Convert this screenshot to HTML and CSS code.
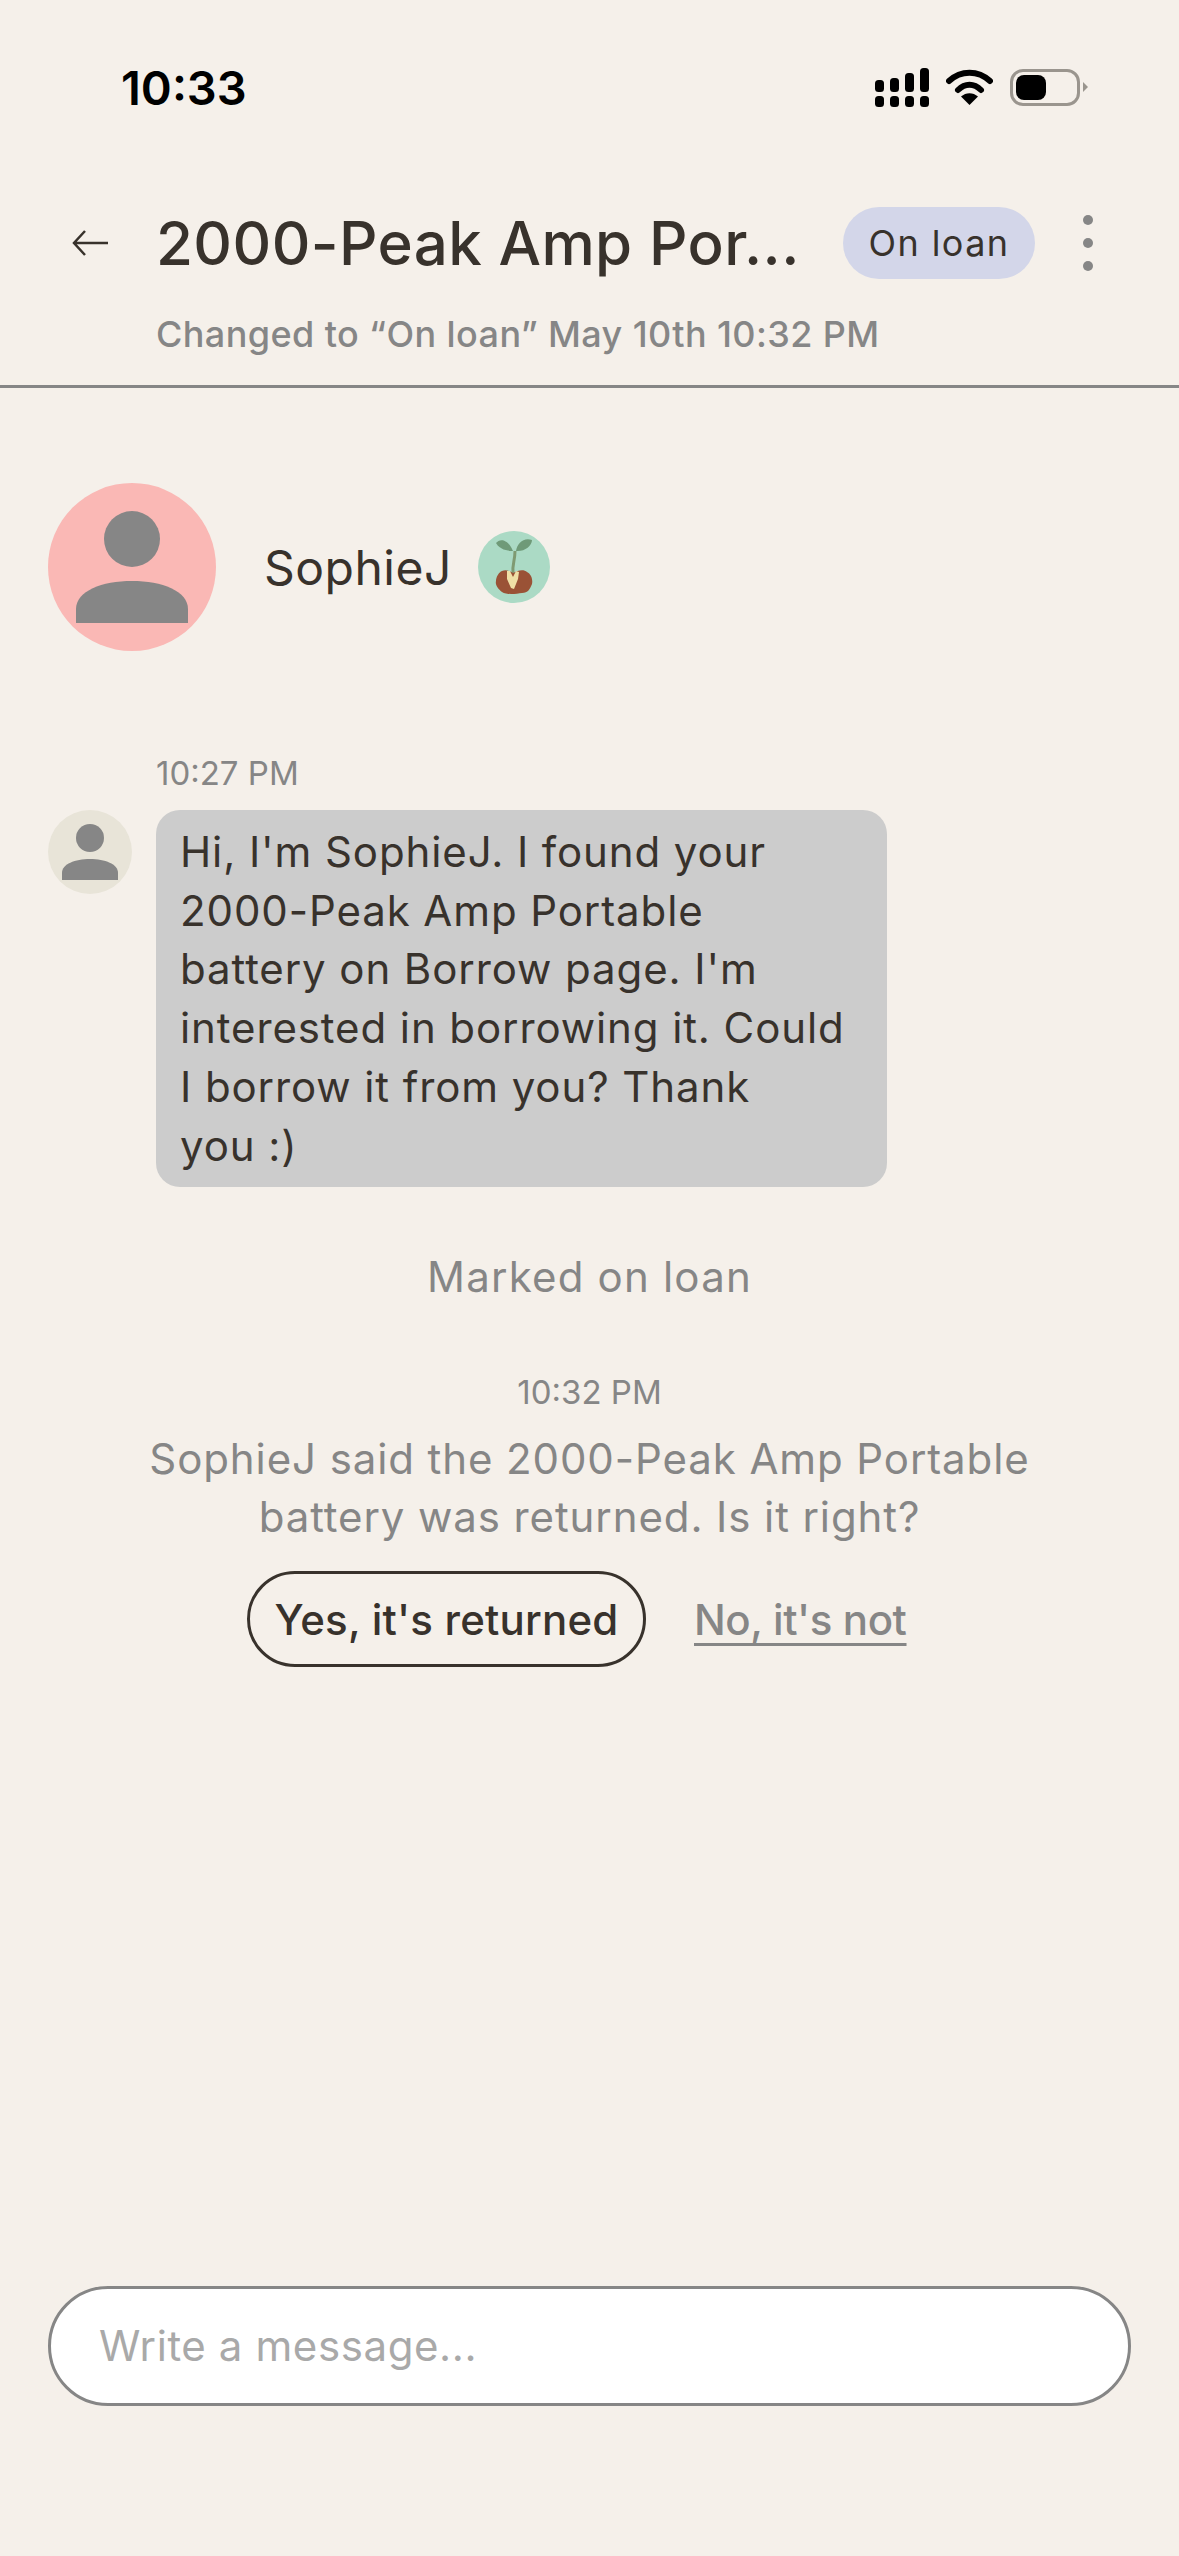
FILE: index.html
```html
<!DOCTYPE html>
<html lang="en">
<head>
  <meta charset="UTF-8" />
  <title>Chat</title>
  <link rel="stylesheet" href="styles.css">
</head>
<body>
  <svg class="defs" width="0" height="0">
    <symbol id="person" viewBox="0 0 168 168">
      <ellipse cx="84" cy="56" rx="28" ry="28" />
      <path d="M28 140v-14c0-18 26-28 56-28s56 10 56 28v14z" />
    </symbol>
  </svg>

  <div class="app">
    <div class="status-bar">
      <span class="clock">10:33</span>
      <div class="status-icons">
        <svg width="54" height="39" viewBox="0 0 54 39">
          <rect x="0" y="12" width="9" height="12" rx="3.5" />
          <rect x="15" y="10" width="9" height="14" rx="3.5" />
          <rect x="30" y="5" width="9" height="19" rx="3.5" />
          <rect x="45" y="0" width="9" height="24" rx="3.5" />
          <rect x="0" y="28" width="9" height="11" rx="3.5" />
          <rect x="15" y="28" width="9" height="11" rx="3.5" />
          <rect x="30" y="28" width="9" height="11" rx="3.5" />
          <rect x="45" y="28" width="9" height="11" rx="3.5" />
        </svg>
        <svg class="wifi" width="47" height="36" viewBox="0 0 47 36">
          <path d="M3 12C15 1 32 1 44 12" fill="none" stroke="#000" stroke-width="6" stroke-linecap="round" />
          <path d="M12 21C19 14 28 14 35 21" fill="none" stroke="#000" stroke-width="6" stroke-linecap="round" />
          <path d="M15 27.500C20 23 27 23 32 27.500L23.500 36z" />
        </svg>
        <div class="battery"><div class="battery-fill"></div></div>
      </div>
    </div>

    <header class="chat-header">
      <div class="title-row">
        <svg class="back" width="36" height="28" viewBox="0 0 36 28">
          <path d="M36 14H2M13 2L2 14l11 12" fill="none" stroke="#38322c" stroke-width="2.500" />
        </svg>
        <h1 class="title">2000-Peak Amp Por...</h1>
        <span class="pill">On loan</span>
        <div class="kebab"><i></i><i></i><i></i></div>
      </div>
      <p class="subtitle">Changed to “On loan” May 10th 10:32 PM</p>
    </header>

    <div class="profile">
      <svg class="avatar-lg"><use href="#person" /></svg>
      <span class="profile-name">SophieJ</span>
      <svg class="badge" width="72" height="72" viewBox="0 0 72 72">
        <circle cx="36" cy="36" r="36" fill="#abdac5" />
        <g class="plant">
          <path d="M35 20C30 20 22 19 18 12C22 7 30 8 35 20z" fill="#6f9a78" />
          <path d="M38 20C39 12 46 6 54 9C54 15 46 21 38 20z" fill="#6f9a78" />
          <path d="M37 20C37 30 34 34 35 42" fill="none" stroke="#7f9a72" stroke-width="3" />
          <path d="M24 40C28 38 32 40 35 42C40 39 46 38 49 41C53 43 55 48 54 53C52 58 50 62 44 62C38 63 28 64 24 61C20 58 17 54 18 50C18 46 21 41 24 40z" fill="#9a5236" />
          <path d="M29 40L32 40L35 46L38 40L41 41L40 48L36 58L33 57L29 48z" fill="#f0dfa6" />
        </g>
      </svg>
    </div>

    <div class="message">
      <div class="time time-left">10:27 PM</div>
      <div class="message-row">
        <svg class="avatar-sm"><use href="#person" /></svg>
        <div class="bubble">Hi, I'm SophieJ. I found your<br>2000-Peak Amp Portable<br>battery on Borrow page. I'm<br>interested in borrowing it. Could<br>I borrow it from you? Thank<br>you :)</div>
      </div>
    </div>

    <div class="notice notice-one">Marked on loan</div>

    <div class="time time-center">10:32 PM</div>
    <div class="notice notice-two">SophieJ said the 2000-Peak Amp Portable<br>battery was returned. Is it right?</div>

    <div class="actions">
      <button class="btn-yes">Yes, it's returned</button>
      <a class="link-no" href="#">No, it's not</a>
    </div>

    <div class="composer">
      <input type="text" placeholder="Write a message..." />
    </div>
  </div>
</body>
</html>
```

FILE: styles.css
```css
* {
  box-sizing: border-box;
}

body {
  margin: 0;
  background-color: #f5f0ea;
  color: #38322c;
  font-family: 'Inter', 'Noto Sans', sans-serif;
}

.defs {
  position: absolute;
}

.app {
  height: 2556px;
  display: flex;
  flex-direction: column;
}

/* Barra de status */
.status-bar {
  height: 174px;
  padding: 0 99px 0 121px;
  display: flex;
  align-items: center;
  justify-content: space-between;
}

.clock {
  font-size: 47px;
  font-weight: 600;
  color: #000;
}

.status-icons {
  display: flex;
  align-items: center;
}

.wifi {
  margin: 0 17px 0 17px;
}

.battery {
  width: 70px;
  height: 37px;
  border: 3px solid #9a958e;
  border-radius: 13px;
  padding: 3px;
  position: relative;
}

.battery::after {
  content: "";
  position: absolute;
  right: -11px;
  top: 10px;
  border-left: 5px solid #9a958e;
  border-top: 5px solid transparent;
  border-bottom: 5px solid transparent;
}

.battery-fill {
  width: 30px;
  height: 25px;
  background: #000;
  border-radius: 8px;
}

/* Cabecalho */
.chat-header {
  padding-top: 33px;
  height: 214px;
  border-bottom: 3px solid #868686;
}

.title-row {
  height: 72px;
  padding-left: 72px;
  display: flex;
  align-items: center;
}

.back {
  flex-shrink: 0;
}

.title {
  margin: 0 0 0 48px;
  width: 687px;
  font-size: 60px;
  font-weight: 500;
  letter-spacing: 0.4px;
  white-space: nowrap;
}

.pill {
  width: 192px;
  height: 72px;
  background-color: #d3d6e9;
  border-radius: 36px;
  font-size: 36px;
  letter-spacing: 1.4px;
  line-height: 72px;
  text-align: center;
}

.kebab {
  margin-left: 48px;
  display: flex;
  flex-direction: column;
  gap: 13px;
}

.kebab i {
  width: 10px;
  height: 10px;
  border-radius: 50%;
  background-color: #868686;
}

.subtitle {
  margin: 33px 0 0 156px;
  font-size: 36px;
  font-weight: 500;
  letter-spacing: 0.4px;
  color: #868686;
}

/* Perfil */
.profile {
  margin-top: 95px;
  padding-left: 48px;
  display: flex;
  align-items: center;
}

.avatar-lg {
  width: 168px;
  height: 168px;
  border-radius: 50%;
  background-color: #fab8b5;
  fill: #868686;
}

.profile-name {
  margin-left: 48px;
  font-size: 48px;
  letter-spacing: 0.5px;
}

.badge {
  margin-left: 26px;
}

.plant {
  filter: blur(0.6px);
}

/* Mensagem */
.message {
  margin-top: 98px;
  padding-left: 48px;
}

.time {
  font-size: 33px;
  color: #868686;
}

.time-left {
  margin-left: 108px;
  height: 48px;
  line-height: 48px;
}

.message-row {
  margin-top: 13px;
  display: flex;
  gap: 24px;
}

.avatar-sm {
  width: 84px;
  height: 84px;
  border-radius: 50%;
  background-color: #e8e4d8;
  fill: #868686;
}

.bubble {
  width: 731px;
  height: 377px;
  padding: 13px 24px;
  background-color: #cccccc;
  border-radius: 24px;
  font-size: 42px;
  letter-spacing: 0.9px;
  line-height: 58.700px;
  white-space: nowrap;
}

.notice {
  font-size: 42px;
  letter-spacing: 0.9px;
  line-height: 58px;
  color: #868686;
  text-align: center;
}

.notice-one {
  margin-top: 61px;
  letter-spacing: 1.200px;
}

.time-center {
  margin-top: 62px;
  line-height: 48px;
  text-align: center;
}

.notice-two {
  margin-top: 14px;
}

.actions {
  margin-top: 25px;
  padding-left: 247px;
  display: flex;
  align-items: center;
  gap: 48px;
}

.btn-yes {
  width: 399px;
  height: 96px;
  padding: 0;
  background: transparent;
  border: 3px solid #38322c;
  border-radius: 48px;
  color: #38322c;
  font-family: inherit;
  font-size: 42px;
  font-weight: 500;
  letter-spacing: 0.2px;
}

.link-no {
  font-size: 42px;
  font-weight: 500;
  letter-spacing: -0.4px;
  color: #868686;
  text-underline-offset: 8px;
  text-decoration-thickness: 3px;
}

.composer {
  margin-top: auto;
  margin-bottom: 150px;
  padding: 0 48px;
}

.composer input {
  width: 100%;
  height: 120px;
  padding: 0 48px 2px;
  background: #fff;
  border: 3px solid #868686;
  border-radius: 60px;
  font-family: inherit;
  font-size: 42px;
  letter-spacing: 0.6px;
  outline: none;
}

.composer input::placeholder {
  color: #a9a9a9;
}
```
